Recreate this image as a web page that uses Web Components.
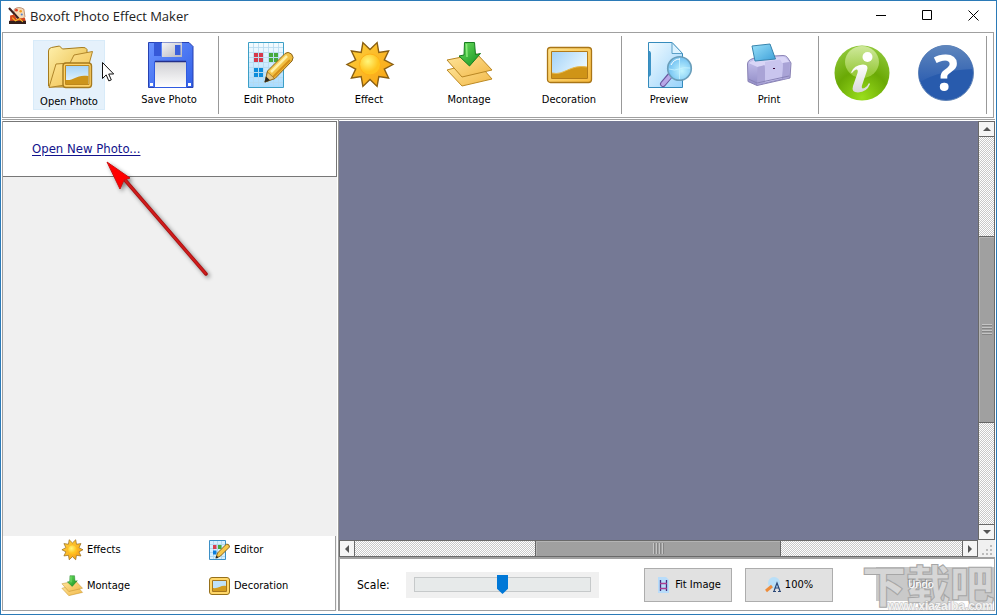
<!DOCTYPE html>
<html lang="en">
<head>
<meta charset="utf-8">
<title>Boxoft Photo Effect Maker</title>
<style>
html,body{height:100%;margin:0}
body{font:11px/14px "DejaVu Sans Condensed","DejaVu Sans",sans-serif;color:#000;background:#fff;overflow:hidden}
</style>
</head>
<body>
<photo-app></photo-app>
<script>
const sunPoints = (() => {
  const p = [];
  for (let i = 0; i < 20; i++) {
    const a = i * Math.PI / 10, r = i % 2 ? 15 : 23;
    p.push((25 + r * Math.cos(a)).toFixed(1) + ',' + (23.5 + r * Math.sin(a)).toFixed(1));
  }
  return p.join(' ');
})();
const gradient = (id, a, b, dir = 'x2="1" y2="1"') =>
  `<linearGradient id="${id}" ${dir}><stop stop-color="${a}"/><stop offset="1" stop-color="${b}"/></linearGradient>`;
const down = 'x2="0" y2="1"';
const ICONS = {
  open: [48, `<defs>${gradient('a','#fff0ac','#e5b437')}${gradient('b','#ffeaa0','#efbd48')}${gradient('s','#a5d3f7','#eef9ff',down)}</defs>
    <path d="M3.500 43V8q0-3 3-3.500l8-1.500 3 3L37 4.500q4-.5 5 2v8L30 44H5Z" fill="url(#a)" stroke="#a57b1d"/>
    <path d="M4 44.500 11 21l14-1 4-8 18.500-3.500L41 32 20 42 4 44.500Z" fill="url(#b)" stroke="#b0852a"/>
    <rect x="18" y="20" width="28.500" height="24.500" rx="3" fill="#ffd267" stroke="#a67b1f" stroke-width="1.400"/>
    <path d="M20.500 22.500h23.500v19H20.500z" fill="url(#s)" stroke="#bd881d"/><path d="M21 37c8 1 10-6 22.500-4v8H21Z" fill="#cc941b"/>`],
  save: [48, `<defs>${gradient('a','#6a93ff','#315fe7')}${gradient('m','#f5f5f7','#b7b7be')}${gradient('w','#cfcfd3','#fff',down)}</defs>
    <path d="M3.500 1.500H44l4 4V46.500H3.500Z" fill="url(#a)" stroke="#2741b1"/>
    <path d="M9 1.500h7V15H9z" fill="#3659d8"/><path d="M17 1.500h20V16H17z" fill="url(#m)"/><path d="M30 4h5.500v10H30z" fill="#3b60db"/>
    <path d="M9.500 20.500h32v26h-32z" fill="url(#w)" stroke="#2f5ae0"/><path d="M10 20.500h31" stroke="#222f8a" stroke-width="1.500"/><path d="M5 42h3v3H5zM43 42h3v3h-3z" fill="#fff"/>`],
  edit: [48, `<defs>${gradient('a','#f5fcff','#a7dbff',down)}${gradient('p','#ffe06a','#e3a020')}</defs>
    <path d="M3.500 1.500h35v45h-35z" fill="url(#a)" stroke="#3c9fc6"/>
    <path d="M8.500 2v44m5-44v44m5-44v44m5-44v44m5-44v44m5-44v44M4 6.500h34m-34 5h34m-34 5h34m-34 5h34m-34 5h34m-34 5h34m-34 5h34m-34 5h34" stroke="#b5d9ef" stroke-width=".8"/>
    <path d="M9 12h4v4H9zM14 12h4v4h-4zM9 17h4v4H9zM14 17h4v4h-4z" fill="#d63a4b"/><path d="M24 12h4v4h-4zM29 12h4v4h-4zM24 17h4v4h-4zM29 17h4v4h-4z" fill="#46aa3d"/><path d="M9 27h4v4H9zM14 27h4v4h-4zM9 32h4v4H9zM14 32h4v4h-4z" fill="#0b8cdb"/>
    <path d="M20 41 22.500 30 40 12.500q3-2.500 6.500.500 3 3.500.5 7L30 37.500Z" fill="url(#p)" stroke="#8c651b"/><path d="M26 31 42 15" stroke="#fff0a8" stroke-width="2.500"/><path d="m28 36 17-17" stroke="#d58f17" stroke-width="2"/><path d="m22.500 31 7 6.500L20 41Z" fill="#e9c680" stroke="#8c651b" stroke-width=".7"/><path d="m19.500 41.500 1.500-6 4 3.800z" fill="#2c2820"/>`],
  editSmall: [22, `<path d="M1.500 1.500h16v19h-16z" fill="#d5efff" stroke="#3c8fc6"/><path d="M5.500 2v18m4-18v18m4-18v18M2 5.500h15M2 9.500h15M2 13.500h15M2 17.500h15" stroke="#b5d9ef"/>
    <path d="M5 6h3.500v4H5z" fill="#d6404f"/><path d="M10 6h3.500v4H10z" fill="#46aa3d"/><path d="M5 11.500h3.500v4H5z" fill="#0b7cdb"/><path d="m8 19 1.500-5L18.500 5q3 0 3 3L12.500 17Z" fill="#f7c748" stroke="#8c651b"/><path d="m7.500 19.500 1-3 2 2z" fill="#222"/>`],
  effect: [48, `<defs>${gradient('a','#ffd23e','#f7a010')}<radialGradient id="b" cx=".4" cy=".35"><stop stop-color="#fff67a"/><stop offset="1" stop-color="#ffc420"/></radialGradient></defs>
    <polygon points="${sunPoints}" fill="url(#a)" stroke="#8a5f12" stroke-width="1.400"/><circle cx="25" cy="23.500" r="10.500" fill="url(#b)" stroke="#ffb11a"/>`],
  montage: [48, `<defs>${gradient('a','#ffe69c','#f2b848')}${gradient('g','#6fe060','#129120')}</defs>
    <path d="M2 29 32 21l15 17-30 7Z" fill="url(#a)" stroke="#bd8a23"/><path d="m2 19 30-6 15 16-30 7Z" fill="url(#a)" stroke="#b98724"/>
    <path d="M19.500 1.500h10l1 12 5-1L24.500 25 14 15l5-1Z" fill="url(#g)" stroke="#177c1f"/><path d="m21.500 3 .5 13" stroke="#8dec7e" stroke-width="1.500"/>`],
  decoration: [48, `<defs>${gradient('a','#ffe28a','#f6b93d')}${gradient('s','#a2d1f7','#edfaff','x2="1" y2=".6"')}</defs>
    <rect x="2.500" y="6.500" width="44" height="35" rx="3" fill="url(#a)" stroke="#a97516" stroke-width="1.300"/><path d="M6.500 10.500h36v27h-36z" fill="url(#s)" stroke="#b37b18"/>
    <path d="M7 32c12 3 18-9 35-6v11H7Z" fill="#cf9417"/><path d="M7 32c12 3 18-9 35-6" stroke="#e8b84b"/>`],
  decorationSmall: [22, `<rect x="1.500" y="2.500" width="20" height="17" rx="2.500" fill="#ffd769" stroke="#96701a"/><path d="M4.500 5.500h14v11h-14z" fill="#bfe2f9" stroke="#a8771b"/><path d="M5 13c5 1 8-3 13-2v5H5Z" fill="#d39c1d"/>`],
  preview: [48, `<defs>${gradient('a','#f2fbff','#98d2fb')}<radialGradient id="l" cx=".6" cy=".6"><stop stop-color="#c3f5ff"/><stop offset="1" stop-color="#7dc8f4"/></radialGradient></defs>
    <path d="M3.500 1.500H27l10.500 11v34h-34Z" fill="url(#a)" stroke="#358bbc"/><path d="M4 10h1l1 2v22l-2 2Z" fill="#3d93c6"/><path d="M27 1.500v11h10.500Z" fill="#ddf3ff" stroke="#5a9fc7"/>
    <path d="m25.500 34-7.500 9" stroke="#69569f" stroke-width="6" stroke-linecap="round"/><path d="m25 35-7 8" stroke="#b8a7e8" stroke-width="4" stroke-linecap="round"/>
    <circle cx="34.500" cy="27.500" r="11.800" fill="url(#l)" stroke="#6a9eba" stroke-width="1.600"/><path d="M24 28q6 2 10 0t11-1M34.500 17v21" stroke="#c9f2ff" stroke-width=".8"/><path d="M26 24q3-6 9-6" stroke="#fff"/>`],
  print: [48, `<defs>${gradient('a','#cdc9f2','#918cc6',down)}${gradient('p','#9ae1fa','#3c9fd8')}</defs>
    <path d="M2.500 23q0-3 3-4.500L12 16l26-1.500q3 0 4.500 2L46 22l-1 15-33 7.500-9-4Z" fill="url(#a)" stroke="#8982b4"/><path d="m3.500 22 9 4 32-5-5-5-27 1Z" fill="#d9d5f6"/>
    <path d="m7 5 18-2 5.500 15L10 20Z" fill="url(#p)" stroke="#3784ad"/><path d="m12.500 26 7-2 1 18-8.500 2ZM38 22l7-1-1 16-6 1.500Z" fill="#a9a3d6"/><path d="m20 21 15-2.500 3 5-1 14-17 4Z" fill="#c9c5ee"/><path d="m3.500 38 8.500 4 32-7" stroke="#8983b7"/><path d="M28 27h2v1h-2z" fill="#303"/>`],
  info: [56, `<defs><radialGradient id="a" cx=".5" cy=".95" r=".9"><stop stop-color="#9ade1c"/><stop offset=".55" stop-color="#6aa905"/><stop offset="1" stop-color="#8cc534"/></radialGradient>${gradient('h','#f1fbd0','#a8d64a',down)}${gradient('w','#fff','#d8d8d8',down)}</defs>
    <circle cx="28" cy="28" r="27.500" fill="url(#a)"/><ellipse cx="28" cy="17" rx="17" ry="16" fill="url(#h)" opacity=".65"/>
    <circle cx="33.500" cy="12" r="5" fill="#fff"/><path d="M17 27.500Q20 20 29 19.500q6 0 4 6l-5 15q-1 4 2.500 2.500 3-1.500 4.500-5l1 1Q33 47 24 47.500q-7 0-5-6.500l4.500-13q1-4-1.500-3.500-2 .5-4 3.500Z" fill="url(#w)"/>`],
  help: [56, `<defs>${gradient('a','#5f86bd','#2f60b1',down)}</defs><circle cx="28" cy="28" r="27.500" fill="#285bad" stroke="#6285b7"/><path d="M1 31A27 27 0 0 1 55 24Q22 25 2 37Z" fill="url(#a)"/><text x="28" y="46" text-anchor="middle" font-family="Open Sans,Noto Sans" font-size="51" font-weight="700" fill="#fff">?</text>`],
  app: [16, `<path d="M5 2q4-3 9 0l1 7-3 3-8-3Z" fill="#f4d8b5" stroke="#a87555" stroke-width=".7"/><path d="m0 1 10 11" stroke="#3a2020" stroke-width="2"/><circle cx="7" cy="3" r="1.300" fill="#e63b20"/><circle cx="11" cy="4" r="1.200" fill="#f39b22"/><circle cx="12" cy="7" r="1" fill="#5284ce"/><path d="m1 8 4-1 2 4 8-1 1 5H1Z" fill="#d5471c"/><path d="M0 13h16v3H0z" fill="#331e1b"/><path d="m3 10 3 3 4-2 3 3" stroke="#f6bc2b"/>`],
  min: [11, `<path d="M0 5.500h10" stroke="#000"/>`],
  max: [11, `<path d="M.5.500h9v9h-9z" stroke="#000"/>`],
  close: [11, `<path d="m.5.500 10 10m0-10-10 10" stroke="#000"/>`],
  fit: [16, `<path d="M3 0h8l3 3v13H3Z" fill="#b8dcfa"/><path d="M5.500 3v11m6-11v11" stroke="#402c7e" stroke-width="1.300"/><path d="M5 6.500h7m-7 5h7" stroke="#ab3b91" stroke-width="1.300"/>`],
  full: [16, `<circle cx="9" cy="6" r="6" fill="#b9dff8"/><path d="M7 9 1 14" stroke="#ed8c3b" stroke-width="3"/><path d="m9 14 3-8 3 8m-5-3h4" stroke="#2b4777" stroke-width="1.200"/><path d="M8 14.500h3m2 0h3" stroke="#2b4777"/>`]
};

const define = (name, html) => customElements.define(name, class extends HTMLElement {
  constructor() {
    super();
    const root = this.attachShadow({ mode: 'open' });
    const t = document.createElement('template');
    t.innerHTML = typeof html === 'function' ? html(this) : html;
    root.append(t.content.cloneNode(true));
  }
});
const attr = (el, name, fallback = '') => el.getAttribute(name) || fallback;

define('ui-icon', el => {
  const [box, art] = ICONS[attr(el, 'name')];
  const size = attr(el, 'size', box);
  return `<style>:host{display:block;flex:none;width:${size}px;height:${size}px}svg{display:block;width:100%;height:100%;overflow:visible}</style>
    <svg viewBox="0 0 ${box} ${box}" fill="none" aria-hidden="true">${art}</svg>`;
});

define('title-bar', `<style>
  :host{display:flex;align-items:center;height:29px;padding:0 0 2px 8px;color:#222}
  h1{font:13px/20px "Open Sans","Noto Sans",sans-serif;margin:0 auto 0 4px}
  button{width:46px;height:28px;padding:0;border:0;background:none;display:grid;place-items:center}
  </style><ui-icon name="app" size="17"></ui-icon><h1><slot></slot></h1>
  <button aria-label="Minimize"><ui-icon name="min"></ui-icon></button><button aria-label="Maximize"><ui-icon name="max"></ui-icon></button><button aria-label="Close"><ui-icon name="close"></ui-icon></button>`);

define('tool-button', el => `<style>
  :host{display:block;width:72px;flex:none}
  button{box-sizing:border-box;width:100%;height:70px;padding:0;border:1px solid transparent;background:none;font:inherit;color:inherit;display:flex;flex-direction:column;align-items:center;gap:4px;white-space:nowrap}
  :host([active]) button{padding-top:2px;background:#e5f1fb;border-color:#d8ebf9}
  </style><button><ui-icon name="${attr(el, 'icon')}"></ui-icon><span><slot></slot></span></button>`);

define('tool-bar', `<style>
  :host{display:flex;align-items:flex-start;margin:0 2px 0 1px;height:76px;padding:7px 6px 1px 30px;border:1px solid #a0a0a0}
  .group{display:flex;gap:28px}
  .line{flex:none;width:1px;height:78px;margin:-4px 14px 0 13px;background:#999}
  .wide{margin:-4px 11px 0 16px}
  .end{margin:-4px 0 0 11px}
  .round{display:flex;gap:28px;padding-top:5px;margin:0 auto 0 1px}
  .round button{border:0;padding:0;background:none;display:block}
  </style>
  <div class="group"><tool-button icon="open" active>Open Photo</tool-button><tool-button icon="save">Save Photo</tool-button></div>
  <div class="line"></div>
  <div class="group"><tool-button icon="edit">Edit Photo</tool-button><tool-button icon="effect">Effect</tool-button><tool-button icon="montage">Montage</tool-button><tool-button icon="decoration">Decoration</tool-button></div>
  <div class="line wide"></div>
  <div class="group"><tool-button icon="preview">Preview</tool-button><tool-button icon="print">Print</tool-button></div>
  <div class="line"></div>
  <div class="round"><button aria-label="Information"><ui-icon name="info"></ui-icon></button><button aria-label="Help"><ui-icon name="help"></ui-icon></button></div>
  <div class="line end"></div>`);

define('link-button', el => `<style>:host{display:block}button{display:flex;align-items:center;gap:4px;padding:0;border:0;background:none;font:inherit;color:inherit}</style>
  <button><ui-icon name="${attr(el, 'icon')}" size="22"></ui-icon><span><slot></slot></span></button>`);

define('side-panel', `<style>
  :host{display:flex;flex-direction:column;background:#f0f0f0;border-left:1px solid #a0a0a0;min-height:0}
  .link{height:54px;border:1px solid #777;border-left:0;background:#fff;padding-left:29px;display:flex;align-items:center;font-size:13px;line-height:16px}
  a{color:#12128c;text-underline-offset:2px}
  .modes{margin-top:auto;display:grid;grid-template-columns:147px 1fr;grid-auto-rows:36px;align-items:center;background:#fff;border:solid #a0a0a0;border-width:0 1px 1px 0;padding:0 0 6px 58px;height:68px;align-content:start;margin-right:1px}
  .modes>*{margin-top:-8px}
  </style>
  <div class="link"><a href="#open">Open New Photo...</a></div>
  <div class="modes"><link-button icon="effect">Effects</link-button><link-button icon="editSmall">Editor</link-button><link-button icon="montage">Montage</link-button><link-button icon="decorationSmall">Decoration</link-button></div>`);

define('scroll-bar', el => {
  const v = el.hasAttribute('vertical');
  return `<style>
  :host{display:flex;flex-direction:${v ? 'column' : 'row'};box-sizing:border-box;min-width:0;min-height:0;border:solid #696969;border-width:${v ? '0 1px' : '1px 0'};background:repeating-conic-gradient(#c9c9c9 0 25%,#fff 0 50%) 0 0/2px 2px}
  button{box-sizing:border-box;flex:none;${v ? 'height:16px;width:100%' : 'width:16px;height:100%'};padding:0;border:1px solid #696969;${v ? 'border-width:1px 0' : 'border-width:0 1px'};background:#f5f5f5;display:grid;place-items:center}
  i{border:4px solid transparent;display:block}
  .first i{${v ? 'border-top:0;border-bottom-color:#555' : 'border-left:0;border-right-color:#555'}}
  .last i{${v ? 'border-bottom:0;border-top-color:#555' : 'border-right:0;border-left-color:#555'}}
  .gap{flex:${attr(el, 'before')} 1 0}.rest{flex:${attr(el, 'after')} 1 0}
  .thumb{flex:${attr(el, 'thumb')} 1 0;box-sizing:border-box;background:#a0a0a0;border:solid #666;border-width:${v ? '1px 0' : '0 1px'};box-shadow:inset 1px 1px #b4b4b4;display:grid;place-items:center}
  .thumb b{width:${v ? 10 : 11}px;height:11px;background:repeating-linear-gradient(${v ? 180 : 90}deg,#c4c4c4 0 1px,#858585 1px 2px,#a0a0a0 2px 3px)}
  </style><button class="first" aria-label="Scroll back"><i></i></button><div class="gap"></div><div class="thumb"><b></b></div><div class="rest"></div><button class="last" aria-label="Scroll forward"><i></i></button>`;
});

define('photo-canvas', `<style>
  :host{display:grid;grid-template:minmax(0,1fr) 17px/minmax(0,1fr) 17px;min-height:0}
  .view{background:#757995}
  .grip{display:grid;place-items:end;padding:0 3px 2px 0;background:#f0f0f0}
  </style><div class="view"></div><scroll-bar vertical before="100" thumb="186" after="102"></scroll-bar>
  <scroll-bar before="181" thumb="244" after="182"></scroll-bar><div class="grip"><svg width="10" height="10" aria-hidden="true"><path d="M8 0h2v2H8zM4 4h2v2H4zM8 4h2v2H8zM0 8h2v2H0zM4 8h2v2H4zM8 8h2v2H8z" fill="#bbb"/></svg></div>`);

define('push-button', el => `<style>
  :host{display:block;flex:none;width:88px}
  button{box-sizing:border-box;width:100%;height:34px;border:1px solid #adadad;background:#e1e1e1;padding:0;font:inherit;color:inherit;display:flex;align-items:center;justify-content:center;gap:4px}
  button:disabled{background:none;border-color:transparent;color:#fff;text-shadow:-1px -1px #888}
  </style><button${el.hasAttribute('off') ? ' disabled' : ''}>${attr(el, 'icon') ? `<ui-icon name="${attr(el, 'icon')}"></ui-icon>` : ''}<span><slot></slot></span></button>`);

define('water-mark', `<style>
  :host{position:absolute;right:0;bottom:-3px;width:132px;height:58px;pointer-events:none}
  .plate{position:absolute;left:14px;top:12px;right:0;height:34px;background:#c9c9c9}
  .name,.site{position:absolute;right:0;white-space:nowrap}
  .name{bottom:-4px;font:900 44px/66px "Noto Sans CJK SC",sans-serif;color:#d6d6d6;-webkit-text-stroke:1px #a6a6a6}
  .site{bottom:0;right:1px;font:700 12px/14px "Liberation Sans",sans-serif;color:#f2f2f2;-webkit-text-stroke:1px #b9b9b9;paint-order:stroke fill}
  </style><div class="plate"></div><div class="name" lang="zh">下载吧</div><div class="site">www.xiazaiba.com</div>`);

define('scale-bar', `<style>
  :host{position:relative;display:flex;align-items:center;height:51px;border:solid #a0a0a0;border-width:2px 1px 1px;padding-left:17px;background:#fff}
  label{width:49px;font-size:12px}
  .track{box-sizing:border-box;flex:0 1 193px;height:26px;padding:0 8px;background:#f0f0f0;display:flex;align-items:center;margin-right:45px}
  input{appearance:none;box-sizing:border-box;width:100%;height:15px;margin:0;border:1px solid #c6c9ca;background:#e7eaea}
  input::-webkit-slider-thumb{appearance:none;width:11px;height:19px;background:#0078d7;clip-path:polygon(0 0,100% 0,100% 72%,50% 100%,0 72%)}
  push-button{margin-right:13px}
  push-button[off]{margin-left:31px;z-index:1}
  </style><label for="scale">Scale:</label><div class="track"><input id="scale" type="range" min="0" max="100" value="50"></div>
  <push-button icon="fit">Fit Image</push-button><push-button icon="full">100%</push-button><water-mark></water-mark><push-button off>Undo</push-button>`);

define('red-pointer', `<style>:host{position:absolute;left:102px;top:156px;pointer-events:none}svg{display:block;filter:drop-shadow(2px 2px 2px #0007)}</style>
  <svg width="112" height="126" aria-hidden="true"><path d="m22 23 81 94" stroke="#a50f0f" stroke-width="3.500" stroke-linecap="round"/><path d="m22 23 81 94" stroke="#d01c1c" stroke-width="2"/><path d="m4 5 23 16-6 2-4 9Z" fill="#f00" stroke="#c11"/></svg>`);
define('mouse-pointer', `<style>:host{position:absolute;left:101px;top:61px;pointer-events:none}</style>
  <svg width="13" height="20" aria-hidden="true"><path d="M.5.500v16l3.700-3.600 2.600 6 2.500-1-2.600-5.900h5Z" fill="#fff" stroke="#111"/></svg>`);

define('photo-app', `<style>
  :host{position:relative;box-sizing:border-box;height:100vh;border:1px solid #2b7ab7;background:#fff;display:flex;flex-direction:column}
  main{flex:1;min-height:0;display:grid;grid-template-columns:335px minmax(0,1fr);column-gap:1px;margin:1px 1px 0 1px;padding-bottom:3px;border-top:1px solid #a0a0a0}
  side-panel{margin-top:1px}
  .right{display:flex;flex-direction:column;min-height:0;border-left:1px solid #999;padding-top:1px}
  photo-canvas{flex:1}
  </style>
  <title-bar>Boxoft Photo Effect Maker</title-bar>
  <tool-bar></tool-bar>
  <main><side-panel></side-panel><div class="right"><photo-canvas></photo-canvas><scale-bar></scale-bar></div></main>
  <mouse-pointer></mouse-pointer><red-pointer></red-pointer>`);
</script>
</body>
</html>
